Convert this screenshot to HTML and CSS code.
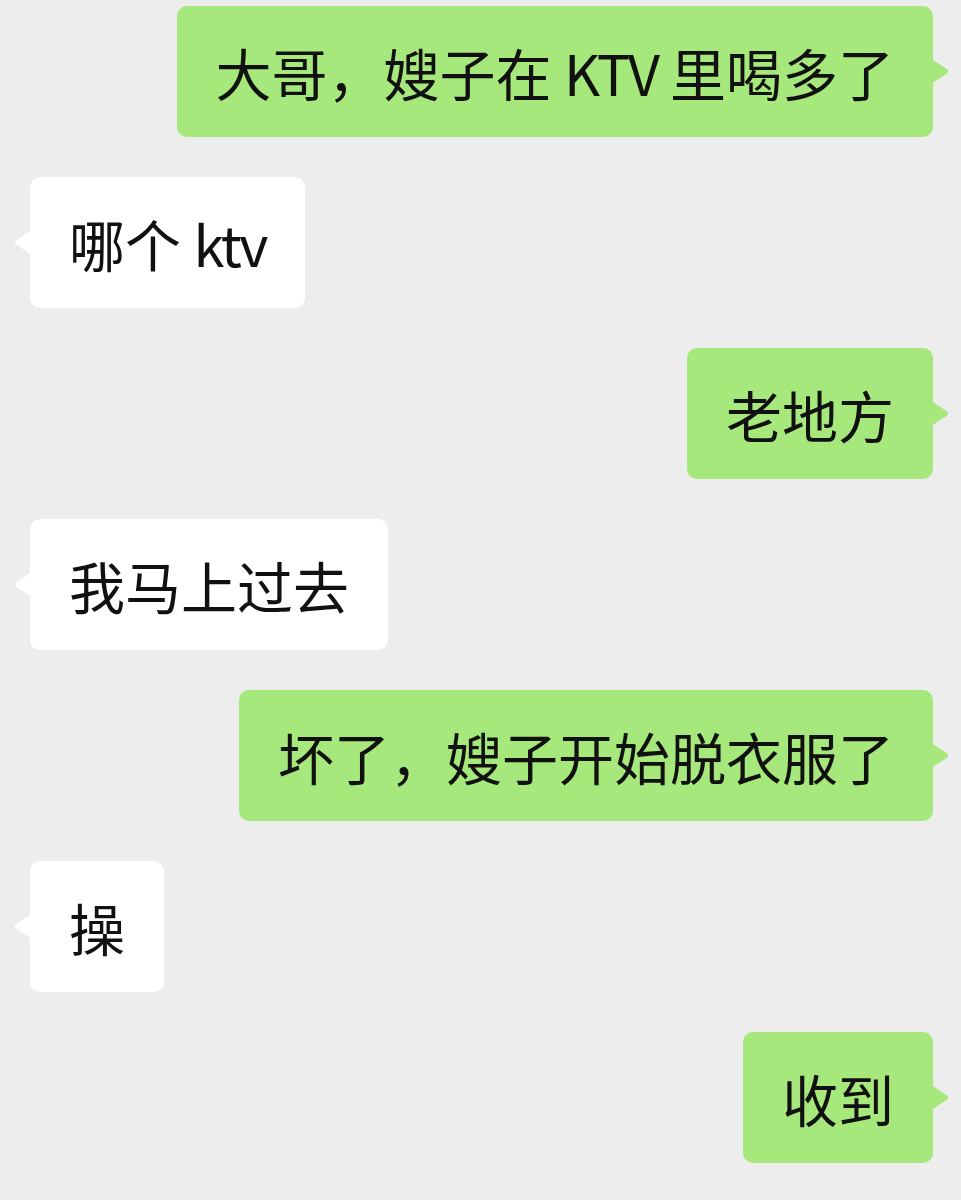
FILE: index.html
```html
<!DOCTYPE html>
<html lang="zh-CN">
<head>
    <meta charset="UTF-8">
    <meta name="viewport" content="width=device-width, initial-scale=1.0">
    <title>聊天记录</title>
    <link rel="stylesheet" href="styles.css">
</head>
<body>
    <div class="chat">
        <div class="msg mine">大哥，嫂子在 <span class="latin">KTV</span> 里喝多了</div>
        <div class="msg theirs">哪个 <span class="latin">ktv</span></div>
        <div class="msg mine">老地方</div>
        <div class="msg theirs">我马上过去</div>
        <div class="msg mine">坏了，嫂子开始脱衣服了</div>
        <div class="msg theirs">操</div>
        <div class="msg mine">收到</div>
    </div>
</body>
</html>
```

FILE: styles.css
```css
body {
    margin: 0;
    background: #ededed;
    color: #111;
    font-family: 'Noto Sans CJK SC', 'Noto Sans', sans-serif;
}
.chat {
    display: flex;
    flex-direction: column;
    gap: 40px;
    padding: 6px 28px 0 30px;
}
.msg {
    position: relative;
    padding: 26px 39px;
    font-size: 56px;
    line-height: 79px;
    border-radius: 10px;
    white-space: nowrap;
}
.latin {
    letter-spacing: -2.5px;
}
.msg::after {
    content: '';
    position: absolute;
    top: 50%;
    width: 16px;
    height: 24px;
    margin-top: -12px;
    background: inherit;
}
.mine {
    align-self: flex-end;
    background: #a6e87b;
}
.mine::after {
    right: -15px;
    clip-path: polygon(0 0, 100% 44%, 100% 56%, 0 100%);
}
.theirs {
    align-self: flex-start;
    background: #fff;
}
.theirs::after {
    left: -15px;
    clip-path: polygon(100% 0, 0 44%, 0 56%, 100% 100%);
}
```
